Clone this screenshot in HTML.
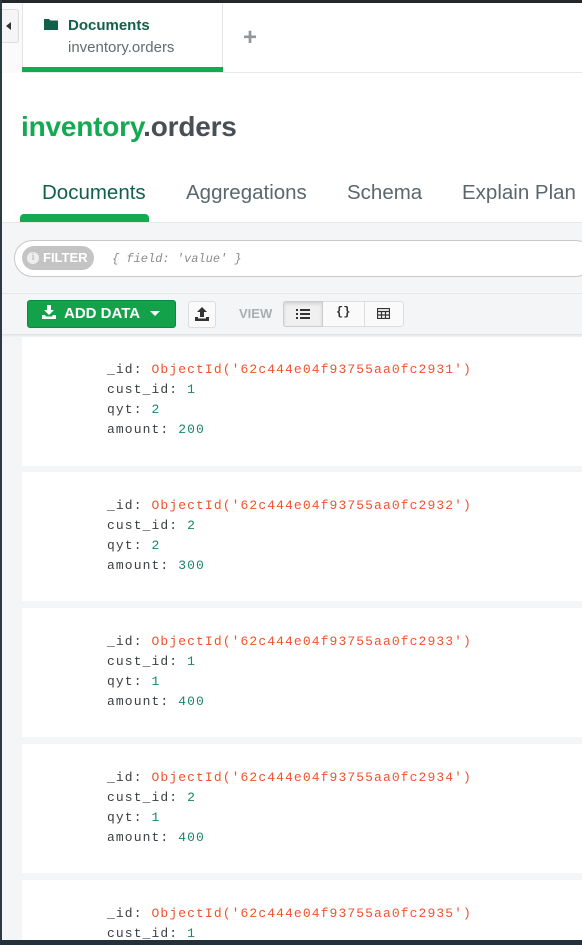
<!DOCTYPE html>
<html><head><style>
*{margin:0;padding:0;box-sizing:border-box}
html,body{width:582px;height:945px;overflow:hidden}
body{background:#fff;position:relative;font-family:"Liberation Sans",sans-serif}
.abs{position:absolute}
.mono{font-family:"Liberation Mono",monospace;font-size:13px}
.card{position:absolute;left:22px;width:560px;height:129px;background:#fff}
.line{position:absolute;left:85px;white-space:pre;color:#3b3f44;letter-spacing:1.1px}
.oid{color:#f0522e}.num{color:#16876b}
</style></head><body>
<div class="abs" style="left:0;top:0;width:582px;height:3px;background:#22272b"></div>
<div class="abs" style="left:0;top:0;width:2px;height:945px;background:#2c3a44"></div>
<div class="abs" style="left:2px;top:3px;width:20px;height:70px;background:#fafafa"></div>
<div class="abs" style="left:2px;top:9px;width:17px;height:34px;background:#f5f5f5;border:1px solid #ddd;border-left:none;border-radius:0 3px 3px 0"></div>
<div class="abs" style="left:6px;top:22px;width:0;height:0;border-top:4px solid transparent;border-bottom:4px solid transparent;border-right:5px solid #333"></div>
<div class="abs" style="left:22px;top:3px;width:201px;height:70px;border-left:1px solid #e4e4e4;border-right:1px solid #e4e4e4"></div>
<div class="abs" style="left:22px;top:67px;width:201px;height:5px;background:#13aa52"></div>
<div class="abs" style="left:22px;top:72px;width:560px;height:1px;background:#e6e9ea"></div>
<svg class="abs" style="left:44px;top:18px" width="14" height="12" viewBox="0 0 14 12"><path d="M0 1h5l1.5 1.5H14V12H0z" fill="#11614a"/></svg>
<div class="abs" style="left:68px;top:17px;font-size:15px;font-weight:bold;color:#11614a">Documents</div>
<div class="abs" style="left:68px;top:39px;font-size:15px;color:#646c70">inventory.orders</div>
<div class="abs" style="left:243px;top:26px;font-size:24px;font-weight:bold;color:#8f979b;line-height:24px">+</div>
<div class="abs" style="left:21px;top:111px;font-size:28px;color:#494f55;letter-spacing:-0.2px"><span style="color:#13aa52;font-weight:bold">inventory</span><span style="font-weight:bold">.orders</span></div>
<div class="abs" style="left:42px;top:181px;font-size:20.5px;color:#11614a">Documents</div>
<div class="abs" style="left:186px;top:181px;font-size:20.5px;color:#5b676d">Aggregations</div>
<div class="abs" style="left:347px;top:181px;font-size:20.5px;color:#5b676d">Schema</div>
<div class="abs" style="left:462px;top:181px;font-size:20.5px;color:#5b676d">Explain Plan</div>
<div class="abs" style="left:20px;top:214px;width:129px;height:8px;background:#13aa52;border-radius:4px 4px 0 0"></div>
<div class="abs" style="left:2px;top:222px;width:580px;height:718px;background:#f4f5f6;border-top:1px solid #e6e8e9"></div>
<div class="abs" style="left:14px;top:240px;width:580px;height:37px;background:#fff;border:1px solid #c8c8c8;border-radius:19px"></div>
<div class="abs" style="left:22px;top:246px;width:72px;height:24px;background:#c4c4c4;border-radius:12px;color:#fff;font-weight:bold;font-size:13px;line-height:24px;padding-left:21px">FILTER</div>
<div class="abs" style="left:27px;top:252px;width:12px;height:12px;border-radius:6px;background:#eee;color:#c4c4c4;font-size:10px;font-weight:bold;text-align:center;line-height:12px;font-family:'Liberation Serif',serif">i</div>
<div class="abs mono" style="left:112px;top:252px;font-size:12px;font-style:italic;color:#8b8b8b">{ field: 'value' }</div>
<div class="abs" style="left:2px;top:293px;width:580px;height:1px;background:#e4e6e7"></div>
<div class="abs" style="left:27px;top:300px;width:149px;height:28px;background:#13a14a;border:1px solid #0e8a3e;border-radius:3px;color:#fff;font-weight:bold;font-size:15px;line-height:26px;padding-left:36px">ADD DATA</div>
<svg class="abs" style="left:42px;top:305px" width="14" height="14" viewBox="0 0 14 14"><path d="M5 0h4v5h3L7 10 2 5h3z M0 10h3l1 1.5h6l1-1.5h3v4H0z" fill="#fff"/></svg>
<div class="abs" style="left:150px;top:311px;border-left:5px solid transparent;border-right:5px solid transparent;border-top:5px solid #fff"></div>
<div class="abs" style="left:188px;top:301px;width:28px;height:27px;background:#fafafa;border:1px solid #ddd;border-radius:3px"></div>
<svg class="abs" style="left:195px;top:307px" width="14" height="14" viewBox="0 0 14 14"><path d="M5 10V5H2l5-5 5 5H9v5z M0 10h3v1.5h8V10h3v4H0z" fill="#333"/></svg>
<div class="abs" style="left:239px;top:306px;font-size:13px;font-weight:bold;color:#a8aeb1">VIEW</div>
<div class="abs" style="left:283px;top:301px;width:121px;height:26px;background:#fafafa;border:1px solid #ddd;border-radius:3px"></div>
<div class="abs" style="left:283px;top:301px;width:40px;height:26px;background:#f0f0f0;border:1px solid #ccc;border-radius:3px 0 0 3px;box-shadow:inset 0 2px 3px rgba(0,0,0,.12)"></div>
<div class="abs" style="left:364px;top:302px;width:1px;height:24px;background:#ddd"></div>
<svg class="abs" style="left:296px;top:308px" width="14" height="12" viewBox="0 0 14 12"><path d="M0 1h2v2H0zM4 1h10v2H4zM0 5h2v2H0zM4 5h10v2H4zM0 9h2v2H0zM4 9h10v2H4z" fill="#333"/></svg>
<div class="abs mono" style="left:336px;top:305px;font-size:12px;font-weight:bold;color:#333">{}</div>
<svg class="abs" style="left:377px;top:308px" width="13" height="11" viewBox="0 0 13 11"><path d="M0.5 0.5h12v10h-12zM0.5 3.5h12M0.5 7h12M4.5 3.5v7M8.5 3.5v7" fill="none" stroke="#333" stroke-width="1.2"/></svg>
<div class="abs" style="left:2px;top:334px;width:580px;height:3px;background:linear-gradient(#e0e0e0,#f4f5f6)"></div>
<div class="card mono" style="top:337px"><div class="line" style="top:25px">_id: <span class="oid">ObjectId('62c444e04f93755aa0fc2931')</span></div><div class="line" style="top:45px">cust_id: <span class="num">1</span></div><div class="line" style="top:65px">qyt: <span class="num">2</span></div><div class="line" style="top:85px">amount: <span class="num">200</span></div></div>
<div class="card mono" style="top:472px"><div class="line" style="top:26px">_id: <span class="oid">ObjectId('62c444e04f93755aa0fc2932')</span></div><div class="line" style="top:46px">cust_id: <span class="num">2</span></div><div class="line" style="top:66px">qyt: <span class="num">2</span></div><div class="line" style="top:86px">amount: <span class="num">300</span></div></div>
<div class="card mono" style="top:608px"><div class="line" style="top:26px">_id: <span class="oid">ObjectId('62c444e04f93755aa0fc2933')</span></div><div class="line" style="top:46px">cust_id: <span class="num">1</span></div><div class="line" style="top:66px">qyt: <span class="num">1</span></div><div class="line" style="top:86px">amount: <span class="num">400</span></div></div>
<div class="card mono" style="top:744px"><div class="line" style="top:26px">_id: <span class="oid">ObjectId('62c444e04f93755aa0fc2934')</span></div><div class="line" style="top:46px">cust_id: <span class="num">2</span></div><div class="line" style="top:66px">qyt: <span class="num">1</span></div><div class="line" style="top:86px">amount: <span class="num">400</span></div></div>
<div class="card mono" style="top:880px;height:60px;overflow:hidden"><div class="line" style="top:26px">_id: <span class="oid">ObjectId('62c444e04f93755aa0fc2935')</span></div><div class="line" style="top:46px">cust_id: <span class="num">1</span></div></div>
<div class="abs" style="left:0;top:940px;width:582px;height:5px;background:#24313a"></div>
</body></html>
